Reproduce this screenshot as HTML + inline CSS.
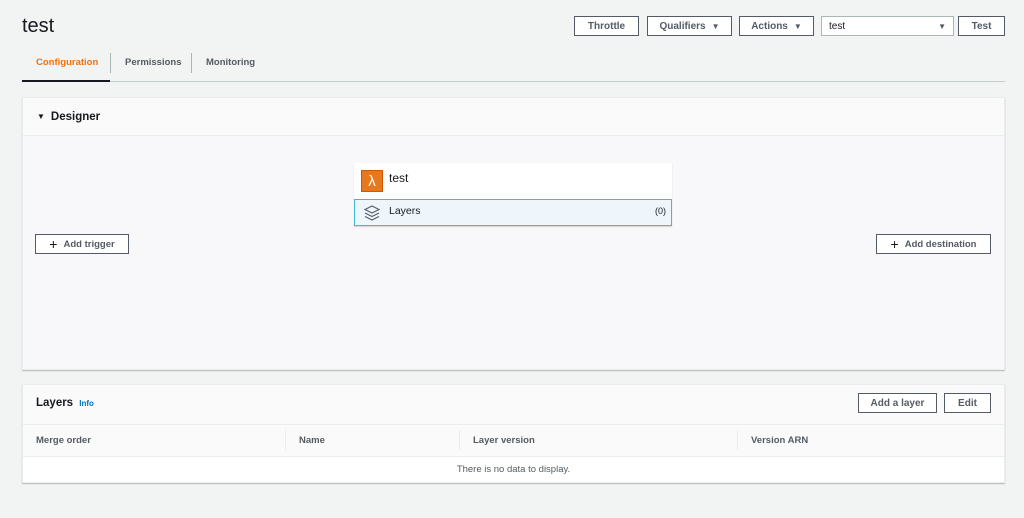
<!DOCTYPE html>
<html><head><style>
*{box-sizing:border-box;margin:0;padding:0}
body{width:1024px;height:518px;background:#f2f3f3;font-family:"Liberation Sans",sans-serif;color:#16191f;position:relative;overflow:hidden}
.a{position:absolute}
.btn{position:absolute;background:#fff;border:1px solid #545b64;font-size:10px;font-weight:bold;color:#545b64;display:flex;align-items:center;justify-content:center;height:20px}
.tri{font-size:8px;margin-left:6px}
.th{position:absolute;top:435px;font-size:9.5px;font-weight:bold;color:#545b64}
.sep{position:absolute;top:430px;width:1px;height:20px;background:#eaeded}
</style></head><body>
<div class="a" style="left:22px;top:15px;font-size:20px">test</div>
<div class="btn" style="left:574px;top:16px;width:65px">Throttle</div>
<div class="btn" style="left:647px;top:16px;width:85px">Qualifiers<span class="tri">▼</span></div>
<div class="btn" style="left:739px;top:16px;width:75px">Actions<span class="tri">▼</span></div>
<div class="btn" style="left:821px;top:16px;width:133px;justify-content:space-between;padding:0 7px;border-color:#aab7b8;font-weight:normal;color:#16191f">test<span style="font-size:8px;color:#545b64">▼</span></div>
<div class="btn" style="left:958px;top:16px;width:47px">Test</div>

<div class="a" style="left:36px;top:57px;font-size:9.5px;font-weight:bold;color:#ec7211">Configuration</div>
<div class="a" style="left:110px;top:53px;width:1px;height:20px;background:#aab7b8"></div>
<div class="a" style="left:125px;top:57px;font-size:9.5px;font-weight:bold;color:#545b64">Permissions</div>
<div class="a" style="left:191px;top:53px;width:1px;height:20px;background:#aab7b8"></div>
<div class="a" style="left:206px;top:57px;font-size:9.5px;font-weight:bold;color:#545b64">Monitoring</div>
<div class="a" style="left:22px;top:81px;width:983px;height:1px;background:#c5cfd0"></div>
<div class="a" style="left:22px;top:80px;width:88px;height:2px;background:#16191f"></div>

<div class="a" style="left:22px;top:97px;width:983px;height:273px;background:#f8f7fa;box-shadow:0 1px 1px rgba(0,0,0,.25);border:1px solid #eaeded">
 <div style="height:38px;background:#fafafa;border-bottom:1px solid #eaeded;display:flex;align-items:center;padding-left:14px;font-size:11.5px;font-weight:bold"><span style="font-size:8px;margin-right:6px">▼</span>Designer</div>
</div>
<div class="a" style="left:354px;top:163px;width:318px;height:63px;background:#fff;box-shadow:0 1px 1px rgba(0,0,0,.15)">
 <div class="a" style="left:7px;top:7px;width:22px;height:22px;background:#e7781c;color:#fff;font-size:15px;text-align:center;line-height:22px;border:1px solid #c85a0c">λ</div>
 <div class="a" style="left:35px;top:8px;font-size:12px">test</div>
 <div class="a" style="left:0;top:36px;width:318px;height:27px;background:#eef6fc;border:1px solid #44b9d6">
  <svg class="a" style="left:7px;top:3px" width="20" height="20" viewBox="0 0 20 20" fill="none" stroke="#545b64" stroke-width="1.1"><path d="M10 3 L17 6.5 L10 10 L3 6.5Z"/><path d="M3 10 L10 13.5 L17 10"/><path d="M3 13.5 L10 17 L17 13.5"/></svg>
  <div class="a" style="left:34px;top:5px;font-size:10.5px">Layers</div>
  <div class="a" style="right:5px;top:6px;font-size:9px">(0)</div>
 </div>
</div>
<div class="btn" style="left:35px;top:234px;width:94px;font-size:9.5px;color:#545b64"><span style="font-size:14px;font-weight:normal;margin-right:6px;color:#16191f">+</span>Add trigger</div>
<div class="btn" style="left:876px;top:234px;width:115px;font-size:9.5px;color:#545b64"><span style="font-size:14px;font-weight:normal;margin-right:6px;color:#16191f">+</span>Add destination</div>

<div class="a" style="left:22px;top:384px;width:983px;height:99px;background:#fff;box-shadow:0 1px 1px rgba(0,0,0,.25);border:1px solid #eaeded">
 <div style="height:40px;background:#fafafa;border-bottom:1px solid #eaeded"></div>
 <div style="height:32px;background:#fafafa;border-bottom:1px solid #eaeded"></div>
</div>
<div class="a" style="left:36px;top:397px;font-size:11.5px;font-weight:bold">Layers <span style="font-size:8px;color:#0073bb;margin-left:3px">Info</span></div>
<div class="btn" style="left:858px;top:393px;width:79px">Add a layer</div>
<div class="btn" style="left:944px;top:393px;width:47px">Edit</div>
<div class="th" style="left:36px">Merge order</div>
<div class="sep" style="left:285px"></div>
<div class="th" style="left:299px">Name</div>
<div class="sep" style="left:459px"></div>
<div class="th" style="left:473px">Layer version</div>
<div class="sep" style="left:737px"></div>
<div class="th" style="left:751px">Version ARN</div>
<div class="a" style="left:22px;top:464px;width:983px;text-align:center;font-size:9.5px;color:#545b64">There is no data to display.</div>
</body></html>
